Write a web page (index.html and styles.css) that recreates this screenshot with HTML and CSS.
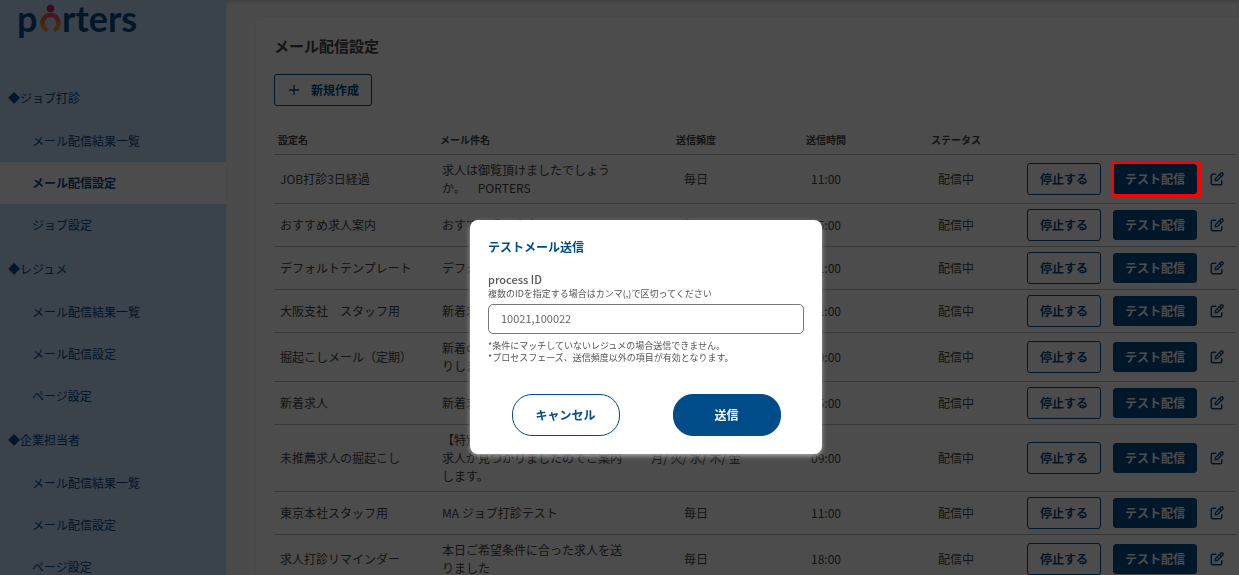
FILE: index.html
```html
<!DOCTYPE html>
<html lang="ja">
<head>
<meta charset="utf-8">
<title>メール配信設定</title>
<link rel="stylesheet" href="styles.css">
</head>
<body>
<svg class="defs" aria-hidden="true">
  <symbol id="edit" viewBox="0 0 16 16">
    <path d="M6.500 2.500H3.200A1.700 1.700 0 0 0 1.500 4.200v8.600a1.700 1.700 0 0 0 1.700 1.700h8.600a1.700 1.700 0 0 0 1.700-1.700V10" fill="none" stroke="currentColor" stroke-width="1.700" stroke-linecap="round"/>
    <path d="M6 10l.5-2.600 5.900-5.900a1.300 1.300 0 0 1 2.100 2.100L8.600 9.500z" fill="none" stroke="currentColor" stroke-width="1.600" stroke-linejoin="round"/>
    <path d="M11 3l2 2" stroke="currentColor" stroke-width="1.300"/>
  </symbol>
</svg>
<div class="app">
  <aside class="sidebar">
    <a class="logo" href="#" aria-label="porters">
      <svg width="128" height="48" viewBox="0 0 128 48">
        <defs>
          <linearGradient id="flame" x1="0" y1="0" x2="0" y2="1">
            <stop offset="0" stop-color="#e8506a"/>
            <stop offset="1" stop-color="#f5a800"/>
          </linearGradient>
        </defs>
        <text class="logo-text" x="3" y="32">p</text>
        <path d="M33.500 30.500A8 8 0 1 1 39.500 30.500" fill="none" stroke="url(#flame)" stroke-width="4.500"/>
        <circle cx="36.500" cy="8.500" r="3.700" fill="#e5115e"/>
        <text class="logo-text" x="48" y="32">rters</text>
      </svg>
    </a>
    <nav class="nav">
      <h2 class="nav-title">◆ジョブ打診</h2>
      <a class="nav-item" href="#">メール配信結果一覧</a>
      <a class="nav-item nav-item-active" href="#" aria-current="page">メール配信設定</a>
      <a class="nav-item" href="#">ジョブ設定</a>
      <h2 class="nav-title">◆レジュメ</h2>
      <a class="nav-item" href="#">メール配信結果一覧</a>
      <a class="nav-item" href="#">メール配信設定</a>
      <a class="nav-item" href="#">ページ設定</a>
      <h2 class="nav-title">◆企業担当者</h2>
      <a class="nav-item" href="#">メール配信結果一覧</a>
      <a class="nav-item" href="#">メール配信設定</a>
      <a class="nav-item" href="#">ページ設定</a>
    </nav>
  </aside>
  <main class="main">
    <section class="card">
      <h1 class="title">メール配信設定</h1>
      <button class="btn btn-new" type="button">
        <svg width="10" height="10" viewBox="0 0 10 10" aria-hidden="true"><path d="M5 0v10M0 5h10" stroke="currentColor" stroke-width="1.300"/></svg>
        新規作成
      </button>
      <table class="table">
        <colgroup><col class="col-name"><col class="col-subject"><col class="col-mid"><col class="col-mid"><col class="col-mid"><col></colgroup>
        <thead>
          <tr><th>設定名</th><th>メール件名</th><th class="mid">送信頻度</th><th class="mid">送信時間</th><th class="mid">ステータス</th><th></th></tr>
        </thead>
        <tbody>
          <tr><td>JOB打診3日経過</td><td>求人は御覧頂けましたでしょうか。　PORTERS</td><td class="mid">毎日</td><td class="mid">11:00</td><td class="mid">配信中</td><td><div class="actions"><button class="btn btn-stop" type="button">停止する</button><span class="marked"><button class="btn btn-test" type="button">テスト配信</button></span><button class="btn-edit" type="button" aria-label="編集"><svg width="14" height="14"><use href="#edit"/></svg></button></div></td></tr>
          <tr><td>おすすめ求人案内</td><td>おすすめ求人案内</td><td class="mid">毎日</td><td class="mid">15:00</td><td class="mid">配信中</td><td><div class="actions"><button class="btn btn-stop" type="button">停止する</button><button class="btn btn-test" type="button">テスト配信</button><button class="btn-edit" type="button" aria-label="編集"><svg width="14" height="14"><use href="#edit"/></svg></button></div></td></tr>
          <tr><td>デフォルトテンプレート</td><td>デフォルト</td><td class="mid">毎日</td><td class="mid">11:00</td><td class="mid">配信中</td><td><div class="actions"><button class="btn btn-stop" type="button">停止する</button><button class="btn btn-test" type="button">テスト配信</button><button class="btn-edit" type="button" aria-label="編集"><svg width="14" height="14"><use href="#edit"/></svg></button></div></td></tr>
          <tr><td>大阪支社　スタッフ用</td><td>新着求人</td><td class="mid">毎日</td><td class="mid">11:00</td><td class="mid">配信中</td><td><div class="actions"><button class="btn btn-stop" type="button">停止する</button><button class="btn btn-test" type="button">テスト配信</button><button class="btn-edit" type="button" aria-label="編集"><svg width="14" height="14"><use href="#edit"/></svg></button></div></td></tr>
          <tr><td>掘起こしメール（定期）</td><td>新着の求人情報をお送<br>りします</td><td class="mid">毎日</td><td class="mid">09:00</td><td class="mid">配信中</td><td><div class="actions"><button class="btn btn-stop" type="button">停止する</button><button class="btn btn-test" type="button">テスト配信</button><button class="btn-edit" type="button" aria-label="編集"><svg width="14" height="14"><use href="#edit"/></svg></button></div></td></tr>
          <tr><td>新着求人</td><td>新着求人</td><td class="mid">毎日</td><td class="mid">15:00</td><td class="mid">配信中</td><td><div class="actions"><button class="btn btn-stop" type="button">停止する</button><button class="btn btn-test" type="button">テスト配信</button><button class="btn-edit" type="button" aria-label="編集"><svg width="14" height="14"><use href="#edit"/></svg></button></div></td></tr>
          <tr><td>未推薦求人の掘起こし</td><td>【特別なご案内】<br>求人が見つかりましたのでご案内します。</td><td class="mid">月/ 火/ 水/ 木/ 金</td><td class="mid">09:00</td><td class="mid">配信中</td><td><div class="actions"><button class="btn btn-stop" type="button">停止する</button><button class="btn btn-test" type="button">テスト配信</button><button class="btn-edit" type="button" aria-label="編集"><svg width="14" height="14"><use href="#edit"/></svg></button></div></td></tr>
          <tr><td>東京本社スタッフ用</td><td>MA ジョブ打診テスト</td><td class="mid">毎日</td><td class="mid">11:00</td><td class="mid">配信中</td><td><div class="actions"><button class="btn btn-stop" type="button">停止する</button><button class="btn btn-test" type="button">テスト配信</button><button class="btn-edit" type="button" aria-label="編集"><svg width="14" height="14"><use href="#edit"/></svg></button></div></td></tr>
          <tr><td>求人打診リマインダー</td><td>本日ご希望条件に合った求人を送りました</td><td class="mid">毎日</td><td class="mid">18:00</td><td class="mid">配信中</td><td><div class="actions"><button class="btn btn-stop" type="button">停止する</button><button class="btn btn-test" type="button">テスト配信</button><button class="btn-edit" type="button" aria-label="編集"><svg width="14" height="14"><use href="#edit"/></svg></button></div></td></tr>
        </tbody>
      </table>
    </section>
  </main>
</div>
<div class="overlay">
  <form class="modal" role="dialog" aria-modal="true" aria-labelledby="modal-title">
    <h2 class="modal-title" id="modal-title">テストメール送信</h2>
    <label class="label" for="process-id">process ID</label>
    <p class="hint">複数のIDを指定する場合はカンマ(,)で区切ってください</p>
    <input class="input" id="process-id" type="text" value="10021,100022">
    <p class="note">*条件にマッチしていないレジュメの場合送信できません。<br>*プロセスフェーズ、送信頻度以外の項目が有効となります。</p>
    <div class="modal-actions">
      <button class="pill" type="button">キャンセル</button>
      <button class="pill pill-primary" type="submit">送信</button>
    </div>
  </form>
</div>
</body>
</html>
```
FILE: styles.css
```css
* { box-sizing: border-box; }
body, button, input {
  font-family: "Noto Sans CJK JP", sans-serif;
  font-size: 12px;
  line-height: 18px;
}
body { margin: 0; color: #444; background: #fafafa; text-spacing-trim: space-all; }
h1, h2, p { margin: 0; }
a { color: inherit; text-decoration: none; }
button { cursor: pointer; }
.defs { position: absolute; width: 0; height: 0; }

.app { display: flex; height: 100vh; overflow: hidden; }
.sidebar { flex: 0 0 226px; background: #c4dcff; color: #004c89; }
.logo { display: block; height: 75px; padding-left: 14px; }
.logo svg { display: block; overflow: visible; }
.logo-text { font-family: Lato, sans-serif; font-size: 36px; font-weight: 700; fill: #004c89; }
.nav { display: flex; flex-direction: column; }
.nav-title { padding: 14px 8px 13px; font-size: 12px; font-weight: 400; }
.nav-item { padding: 12px 32px; }
.nav-item-active { background: #fff; font-weight: 700; }

.main { flex: 1; min-width: 0; padding: 17px 0 0 30px; box-shadow: inset 0 3px 3px #ddd; }
.card {
  padding: 18px 3px 18px 18px;
  background: #fff;
  border-radius: 8px 0 0 8px;
  box-shadow: 0 0 3px #eee;
}
.title { margin-bottom: 17px; font-size: 15px; line-height: 22px; font-weight: 700; }

.btn {
  display: inline-flex;
  align-items: center;
  justify-content: center;
  height: 32px;
  padding: 0;
  border: 1px solid #004c89;
  border-radius: 3px;
  background: #fff;
  color: #004c89;
  font-weight: 700;
}
.btn-new { gap: 12px; width: 98px; padding-left: 2px; }
.btn-stop { width: 74px; }
.btn-test { width: 84px; height: 30px; background: #004c89; color: #fff; }
.btn-edit { display: flex; margin-left: 1px; padding: 0; border: 0; background: none; color: #004c89; }

.table { width: 100%; margin-top: 18px; table-layout: fixed; border-collapse: collapse; }
.col-name { width: 162px; }
.col-subject { width: 195px; }
.col-mid { width: 130px; }
.table tr { border-bottom: 1px solid #bbb; }
.table th { padding: 7px 4px 5px; font-size: 10px; font-weight: 700; text-align: left; }
.table td { padding: 6px; }
.table .mid { text-align: center; }
.table td:last-child { padding: 5px 0; }
.actions { display: flex; align-items: center; gap: 12px; padding-left: 6px; }
.marked { display: flex; position: relative; }
.marked::after {
  content: "";
  position: absolute;
  z-index: 20;
  inset: -3px -4px -3px -2px;
  border: 3px solid #f00;
}

.overlay {
  position: fixed;
  z-index: 10;
  inset: 0;
  display: flex;
  justify-content: center;
  align-items: flex-start;
  padding: 220px 0 0 53px;
  background: rgba(0, 0, 0, 0.7);
}
.modal {
  width: 352px;
  padding: 18px;
  border-radius: 8px;
  background: #fff;
  box-shadow: 0 2px 4px #aaa;
  color: #555;
}
.modal-title { margin-bottom: 14px; color: #004c89; font-size: 12px; font-weight: 700; }
.label { display: block; font-size: 11px; font-weight: 500; }
.hint, .note { font-size: 9px; line-height: 12px; }
.input {
  display: block;
  width: 100%;
  height: 30px;
  margin: 4px 0 6px;
  padding: 0 12px 2px;
  border: 1px solid #777;
  border-radius: 5px;
  background: #fff;
  color: #666;
  font-size: 11px;
}
.modal-actions { display: flex; justify-content: center; gap: 53px; margin-top: 30px; }
.pill {
  width: 108px;
  height: 42px;
  border: 1px solid #004c89;
  border-radius: 20px;
  background: #fff;
  color: #004c89;
  font-weight: 700;
}
.pill-primary { background: #004c89; color: #fff; }
```
